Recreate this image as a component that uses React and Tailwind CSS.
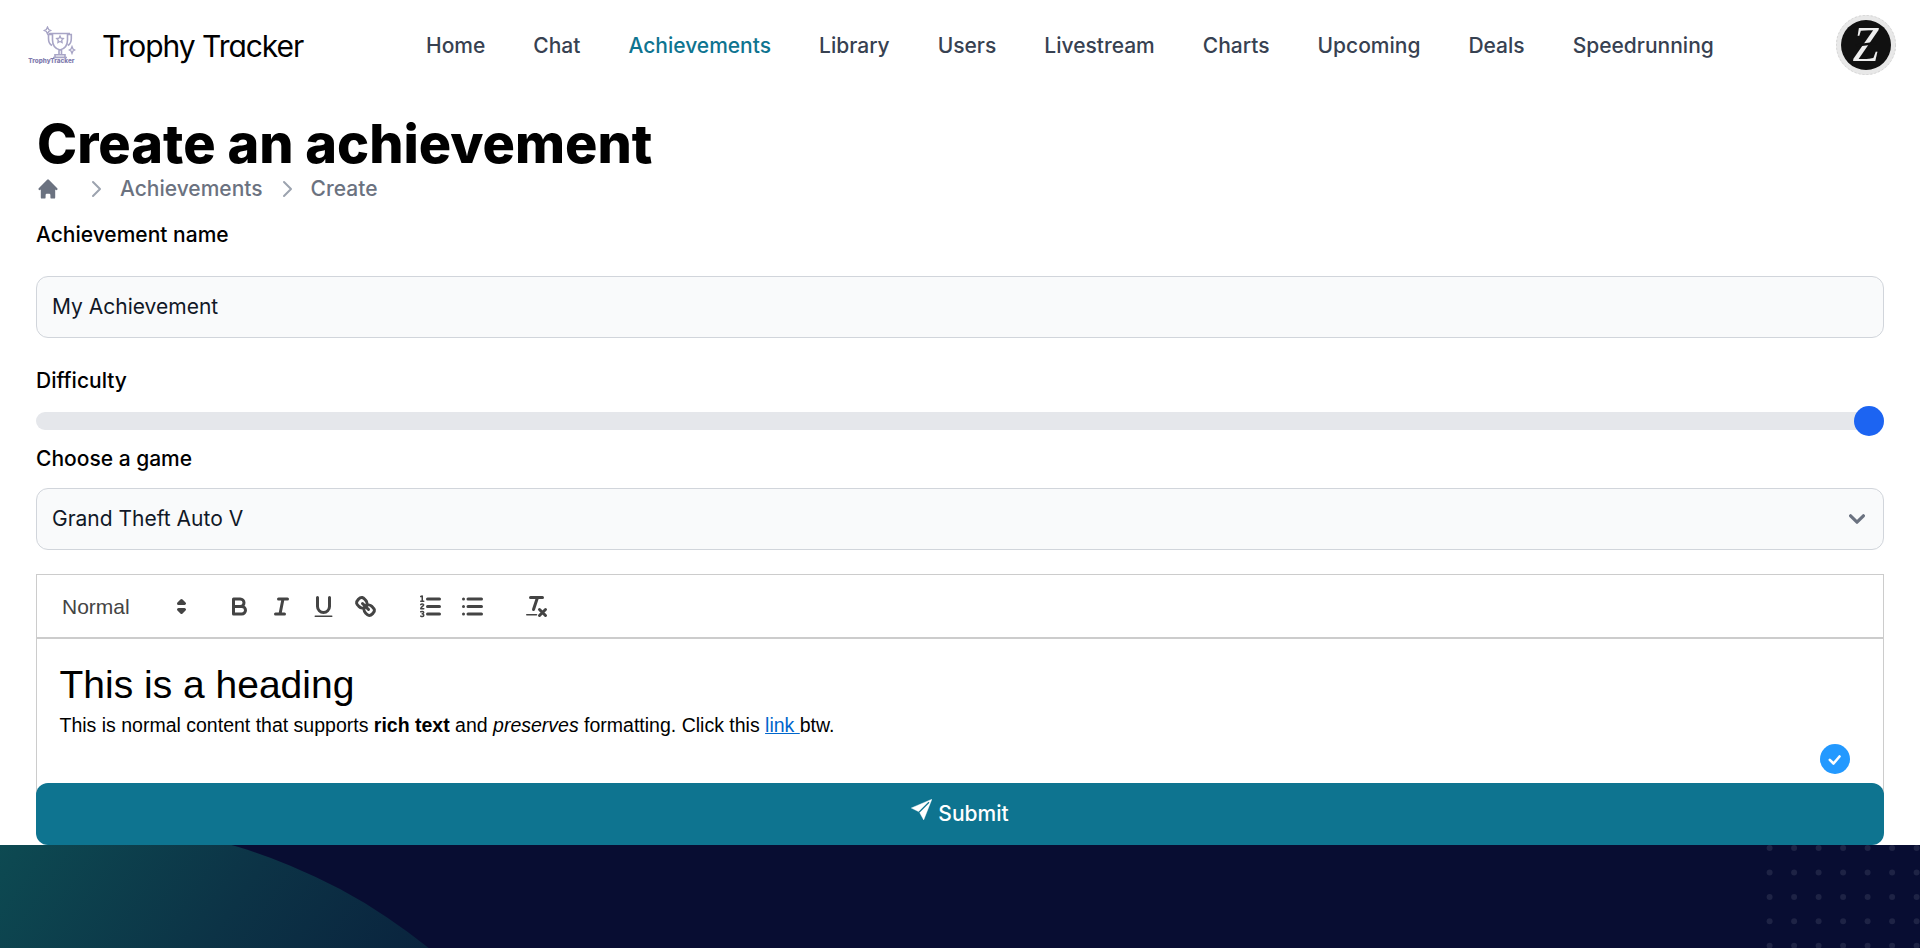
import { HiHome, HiOutlineChevronRight } from "react-icons/hi";

const NAV = ["Home", "Chat", "Achievements", "Library", "Users", "Livestream", "Charts", "Upcoming", "Deals", "Speedrunning"];

function Logo() {
  return (
    <svg viewBox="0 0 48 38" className="h-[38px] w-12" fill="none" stroke="#a8a5c6" strokeWidth="1.6">
      <path d="M21 7.500h21M24.500 7.500v6.500c0 6 3.500 9 7.500 10 4-1 7.500-4 7.500-10V7.500M24.500 8.500H20.500v4c0 4 1.500 6 3.500 7M39.500 8.500h3.800v4c0 4-1.500 6-3.500 7M31 24v5M33.500 24v5M27 28.800h10v2.400h-10zM25 31.500h14" />
      <path strokeWidth="1.300" d="M32 10l1 2.200 2.300.3-1.600 1.700.4 2.400-2.100-1.100-2.100 1.100.4-2.400-1.600-1.700 2.300-.3z" />
      <path strokeWidth="1.300" d="M19.500 1l1.200 2.500 2 1-2 1-1.200 2.500-1.200-2.500-2-1 2-1zM44 20.500l1 2.500 1.700 1-1.700 1-1 2.500-1-2.500-1.700-1 1.700-1z" />
      <text x="0.300" y="36.500" fill="#7f7bae" stroke="none" textLength="46.200" lengthAdjust="spacingAndGlyphs" className="font-[Inter,sans-serif] text-[6.500px] font-extrabold">TrophyTracker</text>
    </svg>
  );
}

function Avatar() {
  return (
    <svg viewBox="0 0 60 60" className="size-[60px]">
      <circle cx="30" cy="30" r="30" fill="#e8e8e8" />
      <circle cx="30" cy="30" r="29.600" fill="none" stroke="#cfcfcf" strokeWidth="0.800" strokeDasharray="2 2" />
      <circle cx="30" cy="30" r="25" fill="#111" />
      <text x="29.500" y="45.500" textAnchor="middle" fill="#efefef" textLength="26" lengthAdjust="spacingAndGlyphs" className="font-['Liberation_Serif',serif] text-[51px] italic">Z</text>
      <path d="M20 30.500L40 28" stroke="#111" strokeWidth="2.500" />
    </svg>
  );
}

function PaperPlane() {
  return (
    <svg viewBox="0 0 21 21" className="mb-[9px] size-[21px]">
      <path d="M0.300 9L20.900 0.200 12.700 20.900 8.300 13z" fill="#fff" stroke="#fff" strokeWidth="0.400" strokeLinejoin="round" />
      <path d="M8 13.300L18 3.300" stroke="#0e7490" strokeWidth="1.300" />
    </svg>
  );
}

function QuillIcon({ children }) {
  return (
    <button className="flex h-9 w-[42px] items-center justify-center">
      <svg viewBox="0 0 18 18" className="size-[27px]" fill="none" stroke="#444" strokeWidth="2" strokeLinecap="round" strokeLinejoin="round">
        {children}
      </svg>
    </button>
  );
}

function Toolbar() {
  return (
    <div className="flex h-16 items-center gap-[22.5px] border-b-2 border-[#ccc] pl-3 text-[#444]">
      <div className="flex w-[147px] items-center justify-between pr-px pl-[13px] text-[21px] font-medium">
        <span className="pt-px">Normal</span>
        <svg viewBox="0 0 18 18" className="size-[27px]" fill="#444" stroke="#444" strokeWidth="2" strokeLinejoin="round">
          <path d="M7 11l2 2 2-2zM7 7l2-2 2 2z" />
        </svg>
      </div>
      <div className="flex">
        <QuillIcon>
          <path d="M5 4h4.500A2.500 2.500 0 0 1 12 6.500 2.500 2.500 0 0 1 9.500 9H5zM5 9h5.500A2.500 2.500 0 0 1 13 11.500 2.500 2.500 0 0 1 10.500 14H5z" />
        </QuillIcon>
        <QuillIcon>
          <path d="M7 4h6M5 14h6M8 14l2-10" />
        </QuillIcon>
        <QuillIcon>
          <path d="M5 3v6a4.012 4.012 0 0 0 4 4 4.012 4.012 0 0 0 4-4V3" />
          <rect x="3" y="15" width="12" height="1" rx="0.500" fill="#444" stroke="none" />
        </QuillIcon>
        <QuillIcon>
          <path d="M7 7l4 4" />
          <path d="M8.900 4.577a3.476 3.476 0 0 1 .36 4.679A3.476 3.476 0 0 1 4.577 8.900C3.185 7.500 2.035 6.400 4.217 4.217S7.500 3.185 8.900 4.577z" />
          <path d="M13.423 9.100a3.476 3.476 0 0 0-4.679-.36 3.476 3.476 0 0 0 .36 4.679c1.392 1.392 2.500 2.542 4.679.36s1.031-3.287-.36-4.679z" />
        </QuillIcon>
      </div>
      <div className="flex">
        <QuillIcon>
          <path d="M7 4h8M7 9h8M7 14h8" />
          <path d="M2.500 5.500h2M2.500 2.300l1-.3v3.500M2.500 7.800c.3-.6 2-.7 1.900.2 0 .7-1.900 1.300-1.900 2.500h2M2.500 12.500c1.500-.5 2.200.1 1.800.8-.2.500-.8.600-.8.600s1.100.1 1 1c-.1.900-1.400.9-2 .5" strokeWidth="1" />
        </QuillIcon>
        <QuillIcon>
          <path d="M6 4h9M6 9h9M6 14h9M3 4h0M3 9h0M3 14h0" />
        </QuillIcon>
      </div>
      <div className="flex">
        <QuillIcon>
          <path d="M5 3h8M7 11L9.500 3.500M11 11l4 4M15 11l-4 4" />
          <rect x="2" y="14" width="7.500" height="1" rx="0.500" fill="#444" stroke="none" />
        </QuillIcon>
      </div>
    </div>
  );
}

export default function App() {
  const dots = [];
  for (let r = 0; r < 5; r++) for (let c = 0; c < 7; c++) dots.push([1769.6 + c * 24.5, 3.1 + r * 24.4]);
  return (
    <div className="flex h-[948px] w-[1920px] flex-col overflow-hidden bg-white font-[Inter,sans-serif] text-[21px] leading-[30px] text-black">
      <header className="flex h-[90px] shrink-0 items-center pr-6 pl-7">
        <Logo />
        <span className="ml-[26px] w-[324px] pt-px text-[30px] tracking-[-1.05px] [font-feature-settings:'cv11']">Trophy Tracker</span>
        <nav className="flex flex-1 gap-12 pt-px font-medium text-[#374151]">
          {NAV.map((n) => (
            <a key={n} className={n === "Achievements" ? "text-[#0e7490]" : ""}>{n}</a>
          ))}
        </nav>
        <Avatar />
      </header>

      <main className="flex h-[755px] shrink-0 flex-col px-9 pt-6">
        <h1 className="pl-px text-[54px] leading-[60px] font-extrabold">Create an achievement</h1>
        <div className="flex h-[30px] items-center font-medium text-[#6b7280]">
          <HiHome className="mr-3 size-6" />
          <HiOutlineChevronRight className="mx-3 size-6 text-[#9ca3af]" />
          <span>Achievements</span>
          <HiOutlineChevronRight className="mx-3 size-6 text-[#9ca3af]" />
          <span>Create</span>
        </div>
        <label className="mt-4 font-medium">Achievement name</label>
        <div className="mt-[26px] flex h-[62px] items-center rounded-xl border border-[#d1d5db] bg-[#f9fafb] px-[15px] text-[#111827]">My Achievement</div>
        <label className="mt-7 font-medium">Difficulty</label>
        <div className="mt-[10px] flex h-[30px] items-center">
          <div className="flex h-[18px] w-full items-center justify-end rounded-full bg-[#e5e7eb]">
            <div className="size-[30px] rounded-full bg-[#1c64f2]" />
          </div>
        </div>
        <label className="mt-2 font-medium">Choose a game</label>
        <div className="mt-[14px] flex h-[62px] items-center justify-between rounded-xl border border-[#d1d5db] bg-[#f9fafb] pr-[18px] pl-[15px] text-[#111827]">
          <span>Grand Theft Auto V</span>
          <svg viewBox="0 0 10 6" className="h-[10px] w-4" fill="none" stroke="#6b7280" strokeWidth="2" strokeLinecap="round" strokeLinejoin="round">
            <path d="M1 1l4 4 4-4" />
          </svg>
        </div>
        <div className="mt-6 h-[221px] shrink-0 border border-[#ccc] font-['Liberation_Sans',Arial,sans-serif]">
          <Toolbar />
          <div className="px-[22.5px] pt-[18px] text-[19.5px] leading-[27.7px]">
            <h2 className="text-[39px] leading-[55.4px]">This is a heading</h2>
            <p>
              This is normal content that supports <strong>rich text</strong> and <em>preserves</em> formatting. Click this{" "}
              <a className="whitespace-pre text-[#06c] underline">link </a>btw.
            </p>
            <div className="mt-1 flex justify-end pr-[10.5px]">
              <svg viewBox="0 0 30 30" className="size-[30px]">
                <circle cx="15" cy="15" r="15" fill="#2399ff" />
                <path d="M9.800 15.800l3.700 3.700 6-7" fill="none" stroke="#fff" strokeWidth="2.600" strokeLinecap="round" strokeLinejoin="round" />
              </svg>
            </div>
          </div>
        </div>
        <button className="relative mt-[-12px] flex h-[62px] w-full shrink-0 items-center justify-center gap-[6px] rounded-xl bg-[#0e7490] font-medium text-white">
          <PaperPlane />
          <span>Submit</span>
        </button>
      </main>

      <footer className="h-[103px] bg-[#080d32]">
        <svg viewBox="0 0 1920 103" className="h-[103px] w-[1920px]">
          <defs>
            <linearGradient id="glow" gradientUnits="userSpaceOnUse" x1="0" y1="0" x2="370" y2="260">
              <stop offset="0" stopColor="#0d4a52" />
              <stop offset="0.500" stopColor="#0c3346" />
              <stop offset="1" stopColor="#09203c" />
            </linearGradient>
          </defs>
          <circle cx="76" cy="538" r="560" fill="url(#glow)" />
          {dots.map(([x, y]) => (
            <circle key={`${x}-${y}`} cx={x} cy={y} r="3" fill="#1e2345" />
          ))}
        </svg>
      </footer>
    </div>
  );
}
